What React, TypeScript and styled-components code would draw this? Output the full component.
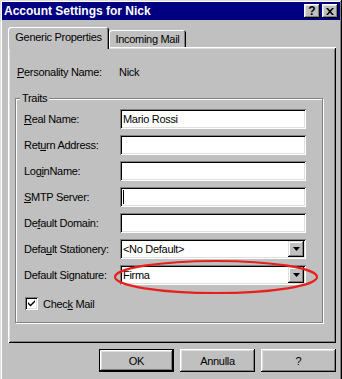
import React from 'react';
import styled, { createGlobalStyle } from 'styled-components';

const Global = createGlobalStyle`
  html, body {
    margin: 0;
    padding: 0;
    background: #c0c0c0;
  }
  body {
    width: 342px;
    height: 379px;
    overflow: hidden;
    font-family: "Liberation Sans", Arial, sans-serif;
    font-size: 11px;
    letter-spacing: -0.3px;
    color: #000;
  }
`;

const raised = `
  box-shadow: inset -1px -1px #000, inset 1px 1px #fff, inset -2px -2px #808080, inset 2px 2px #dfdfdf;
`;

const sunken = `
  box-shadow: inset 1px 1px #808080, inset -1px -1px #fff, inset 2px 2px #000, inset -2px -2px #dfdfdf;
`;

const Window = styled.div`
  position: relative;
  box-sizing: border-box;
  width: 342px;
  height: 381px;
  padding: 2px;
  background: #c0c0c0;
  box-shadow: inset -1px -1px #000, inset 1px 1px #dfdfdf, inset -2px -2px #808080, inset 2px 2px #fff;
`;

const TitleBar = styled.div`
  height: 18px;
  background: #000080;
  color: #fff;
  display: flex;
  align-items: center;
  padding: 0 2px 0 2px;
  font-weight: bold;
  font-size: 12px;
  letter-spacing: 0;
`;

const Title = styled.span`
  flex: 1;
`;

const CaptionButton = styled.div`
  width: 16px;
  height: 14px;
  margin-left: 1px;
  background: #c0c0c0;
  color: #000;
  display: flex;
  align-items: center;
  justify-content: center;
  font-size: 12px;
  font-weight: bold;
  ${raised}
`;

const Content = styled.div`
  padding: 7px 4px 0 6px;
`;

const TabRow = styled.div`
  position: relative;
  z-index: 1;
  display: flex;
  align-items: flex-end;
  height: 22px;
  margin-bottom: -2px;
`;

const Tab = styled.div<{ $active?: boolean }>`
  box-sizing: border-box;
  background: #c0c0c0;
  width: ${p => (p.$active ? 101 : 77)}px;
  height: ${p => (p.$active ? 22 : 17)}px;
  margin-bottom: ${p => (p.$active ? 0 : 2)}px;
  border-radius: 3px 3px 0 0;
  display: flex;
  align-items: center;
  justify-content: center;
  padding-bottom: ${p => (p.$active ? 3 : 0)}px;
  box-shadow: inset 1px 1px #fff, inset -1px 0 #000, inset -2px 0 #808080;
`;

const Panel = styled.div`
  box-sizing: border-box;
  height: 296px;
  padding: 18px 0 0 7px;
  box-shadow: inset 1px 1px #fff, inset -1px -1px #000, inset 2px 2px #dfdfdf, inset -2px -2px #808080;
`;

const InfoRow = styled.div`
  display: grid;
  grid-template-columns: 102px auto;
  padding-left: 2px;
  line-height: 14px;
`;

const GroupBox = styled.div`
  position: relative;
  box-sizing: border-box;
  width: 308px;
  margin-top: 19px;
  padding: 10px 0 12px 8px;
  border: 1px solid #808080;
  box-shadow: 1px 1px 0 #fff, inset 1px 1px 0 #fff;
`;

const Legend = styled.span`
  position: absolute;
  top: -7px;
  left: 4px;
  padding: 0 2px;
  background: #c0c0c0;
  line-height: 13px;
`;

const Fields = styled.div`
  display: grid;
  grid-template-columns: 96px 186px;
  row-gap: 6px;
  align-items: center;
`;

const Label = styled.label`
  line-height: 14px;
  white-space: nowrap;
`;

const Field = styled.div`
  position: relative;
  box-sizing: border-box;
  height: 20px;
  background: #fff;
  display: flex;
  align-items: center;
  padding-left: 3px;
  ${sunken}
`;

const Caret = styled.span`
  width: 1px;
  height: 14px;
  background: #000;
`;

const DropButton = styled.div`
  position: absolute;
  right: 2px;
  top: 2px;
  width: 16px;
  height: 16px;
  background: #c0c0c0;
  display: flex;
  align-items: center;
  justify-content: center;
  box-shadow: inset -1px -1px #000, inset 1px 1px #dfdfdf, inset -2px -2px #808080, inset 2px 2px #fff;
`;

const CheckRow = styled.div`
  display: flex;
  align-items: center;
  gap: 5px;
  margin-top: 12px;
  padding-left: 1px;
  height: 13px;
`;

const CheckBox = styled.div`
  width: 13px;
  height: 13px;
  background: #fff;
  display: flex;
  align-items: center;
  justify-content: center;
  ${sunken}
`;

const ButtonRow = styled.div`
  display: flex;
  justify-content: flex-end;
  gap: 6px;
  margin-top: 6px;
`;

const Button = styled.div<{ $default?: boolean }>`
  box-sizing: border-box;
  width: 75px;
  height: 23px;
  display: flex;
  align-items: center;
  justify-content: center;
  background: #c0c0c0;
  ${p =>
    p.$default
      ? `box-shadow: inset 0 0 0 1px #000, inset -2px -2px #000, inset 2px 2px #fff, inset -3px -3px #808080, inset 3px 3px #dfdfdf;`
      : raised}
`;

const Annotation = styled.svg`
  position: absolute;
  left: 112px;
  top: 257px;
  pointer-events: none;
`;

const Arrow = () => (
  <svg width="7" height="4" viewBox="0 0 7 4">
    <path d="M0 0h7L3.5 4z" fill="#000" />
  </svg>
);

type Row = { label: React.ReactNode; value?: string; caret?: boolean; select?: boolean };

const rows: Row[] = [
  { label: <><u>R</u>eal Name:</>, value: 'Mario Rossi' },
  { label: <>Ret<u>u</u>rn Address:</> },
  { label: <>Log<u>i</u>nName:</> },
  { label: <><u>S</u>MTP Server:</>, caret: true },
  { label: <>De<u>f</u>ault Domain:</> },
  { label: <>Defa<u>u</u>lt Stationery:</>, value: '<No Default>', select: true },
  { label: <>Default Si<u>g</u>nature:</>, value: 'Firma', select: true },
];

export default function App() {
  return (
    <>
      <Global />
      <Window>
        <TitleBar>
          <Title>Account Settings for Nick</Title>
          <CaptionButton>?</CaptionButton>
          <CaptionButton style={{ marginLeft: 2 }}>
            <svg width="8" height="7" viewBox="0 0 8 7">
              <path d="M0 0h2l2 2.3L6 0h2L5 3.5 8 7H6L4 4.7 2 7H0l3-3.5z" fill="#000" />
            </svg>
          </CaptionButton>
        </TitleBar>
        <Content>
          <TabRow>
            <Tab $active>Generic Properties</Tab>
            <Tab>Incoming Mail</Tab>
          </TabRow>
          <Panel>
            <InfoRow>
              <span><u>P</u>ersonality Name:</span>
              <span>Nick</span>
            </InfoRow>
            <GroupBox>
              <Legend>Traits</Legend>
              <Fields>
                {rows.map((r, i) => (
                  <React.Fragment key={i}>
                    <Label>{r.label}</Label>
                    <Field>
                      {r.caret && <Caret />}
                      {r.value}
                      {r.select && (
                        <DropButton>
                          <Arrow />
                        </DropButton>
                      )}
                    </Field>
                  </React.Fragment>
                ))}
              </Fields>
              <CheckRow>
                <CheckBox>
                  <svg width="7" height="7" viewBox="0 0 7 7">
                    <path d="M0 2l2.5 2.5L7 0v2L2.5 6.5 0 4z" fill="#000" />
                  </svg>
                </CheckBox>
                <span>Chec<u>k</u> Mail</span>
              </CheckRow>
            </GroupBox>
          </Panel>
          <ButtonRow>
            <Button $default>OK</Button>
            <Button>Annulla</Button>
            <Button>?</Button>
          </ButtonRow>
        </Content>
        <Annotation width="210" height="40" viewBox="0 0 210 40">
          <ellipse cx="104" cy="20" rx="101" ry="16" fill="none" stroke="#e8201c" strokeWidth="2.2" />
        </Annotation>
      </Window>
    </>
  );
}
